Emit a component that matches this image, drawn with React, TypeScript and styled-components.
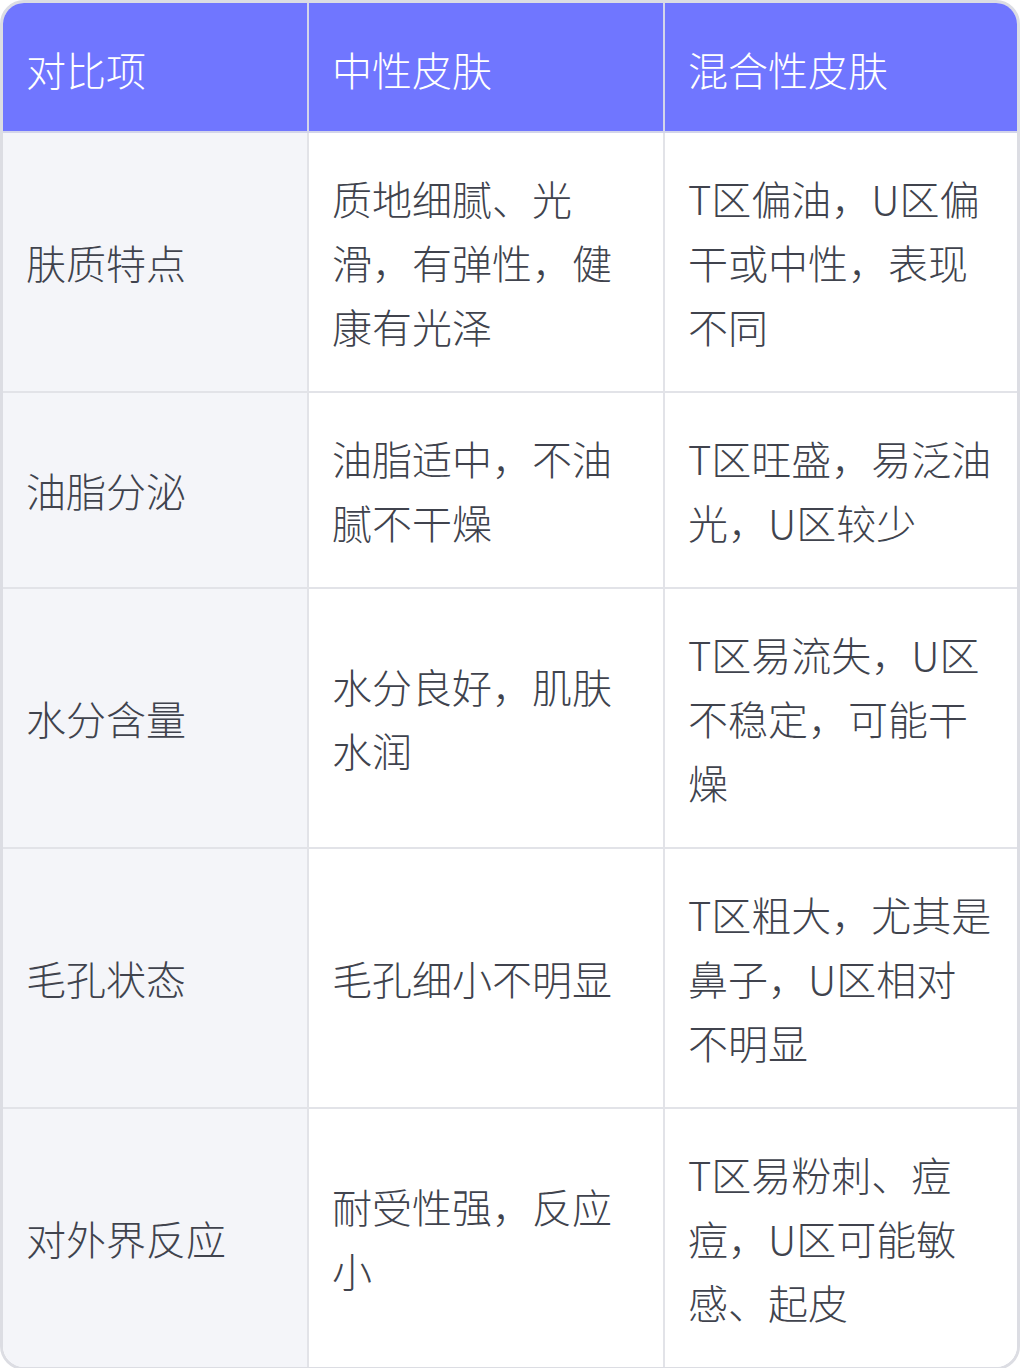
import styled, { createGlobalStyle } from 'styled-components';

const GlobalStyle = createGlobalStyle`
  body {
    margin: 0;
    background: #fff;
    font-family: "Noto Sans CJK SC", "Noto Sans", sans-serif;
  }
`;

const Table = styled.div`
  width: 1020px;
  box-sizing: border-box;
  border: 3px solid #dcdde3;
  border-radius: 24px;
  overflow: hidden;
  display: grid;
  grid-template-columns: 306px 356px 1fr;
`;

const Cell = styled.div<{ $head?: boolean; $first?: boolean; $lastCol?: boolean; $lastRow?: boolean }>`
  box-sizing: border-box;
  display: flex;
  align-items: center;
  padding: ${p => (p.$head ? '34px 22px 30px 23px' : '33px 22px 33px 23px')};
  font-family: "Noto Sans CJK SC Light", "Noto Sans CJK SC", "Noto Sans", sans-serif;
  font-size: 40px;
  line-height: 64px;
  font-weight: 300;
  color: ${p => (p.$head ? '#ffffff' : '#40434d')};
  background: ${p => (p.$head ? '#7076ff' : p.$first ? '#f4f5f9' : '#ffffff')};
  border-right: ${p => (p.$lastCol ? 'none' : `2px solid ${p.$head ? '#d3d5ea' : '#e2e3e8'}`)};
  border-bottom: ${p => (p.$lastRow ? 'none' : `2px solid ${p.$head ? '#d3d5ea' : '#e2e3e8'}`)};
`;

const head = ['对比项', '中性皮肤', '混合性皮肤'];

const rows: string[][] = [
  ['肤质特点', '质地细腻、光滑，有弹性，健康有光泽', 'T区偏油，U区偏干或中性，表现不同'],
  ['油脂分泌', '油脂适中，不油腻不干燥', 'T区旺盛，易泛油光，U区较少'],
  ['水分含量', '水分良好，肌肤水润', 'T区易流失，U区不稳定，可能干燥'],
  ['毛孔状态', '毛孔细小不明显', 'T区粗大，尤其是鼻子，U区相对不明显'],
  ['对外界反应', '耐受性强，反应小', 'T区易粉刺、痘痘，U区可能敏感、起皮'],
];

export default function App() {
  return (
    <>
      <GlobalStyle />
      <Table>
        {head.map((h, i) => (
          <Cell key={h} $head $lastCol={i === 2}>
            {h}
          </Cell>
        ))}
        {rows.map((r, ri) =>
          r.map((text, ci) => (
            <Cell
              key={`${ri}-${ci}`}
              $first={ci === 0}
              $lastCol={ci === 2}
              $lastRow={ri === rows.length - 1}
            >
              {text}
            </Cell>
          ))
        )}
      </Table>
    </>
  );
}
